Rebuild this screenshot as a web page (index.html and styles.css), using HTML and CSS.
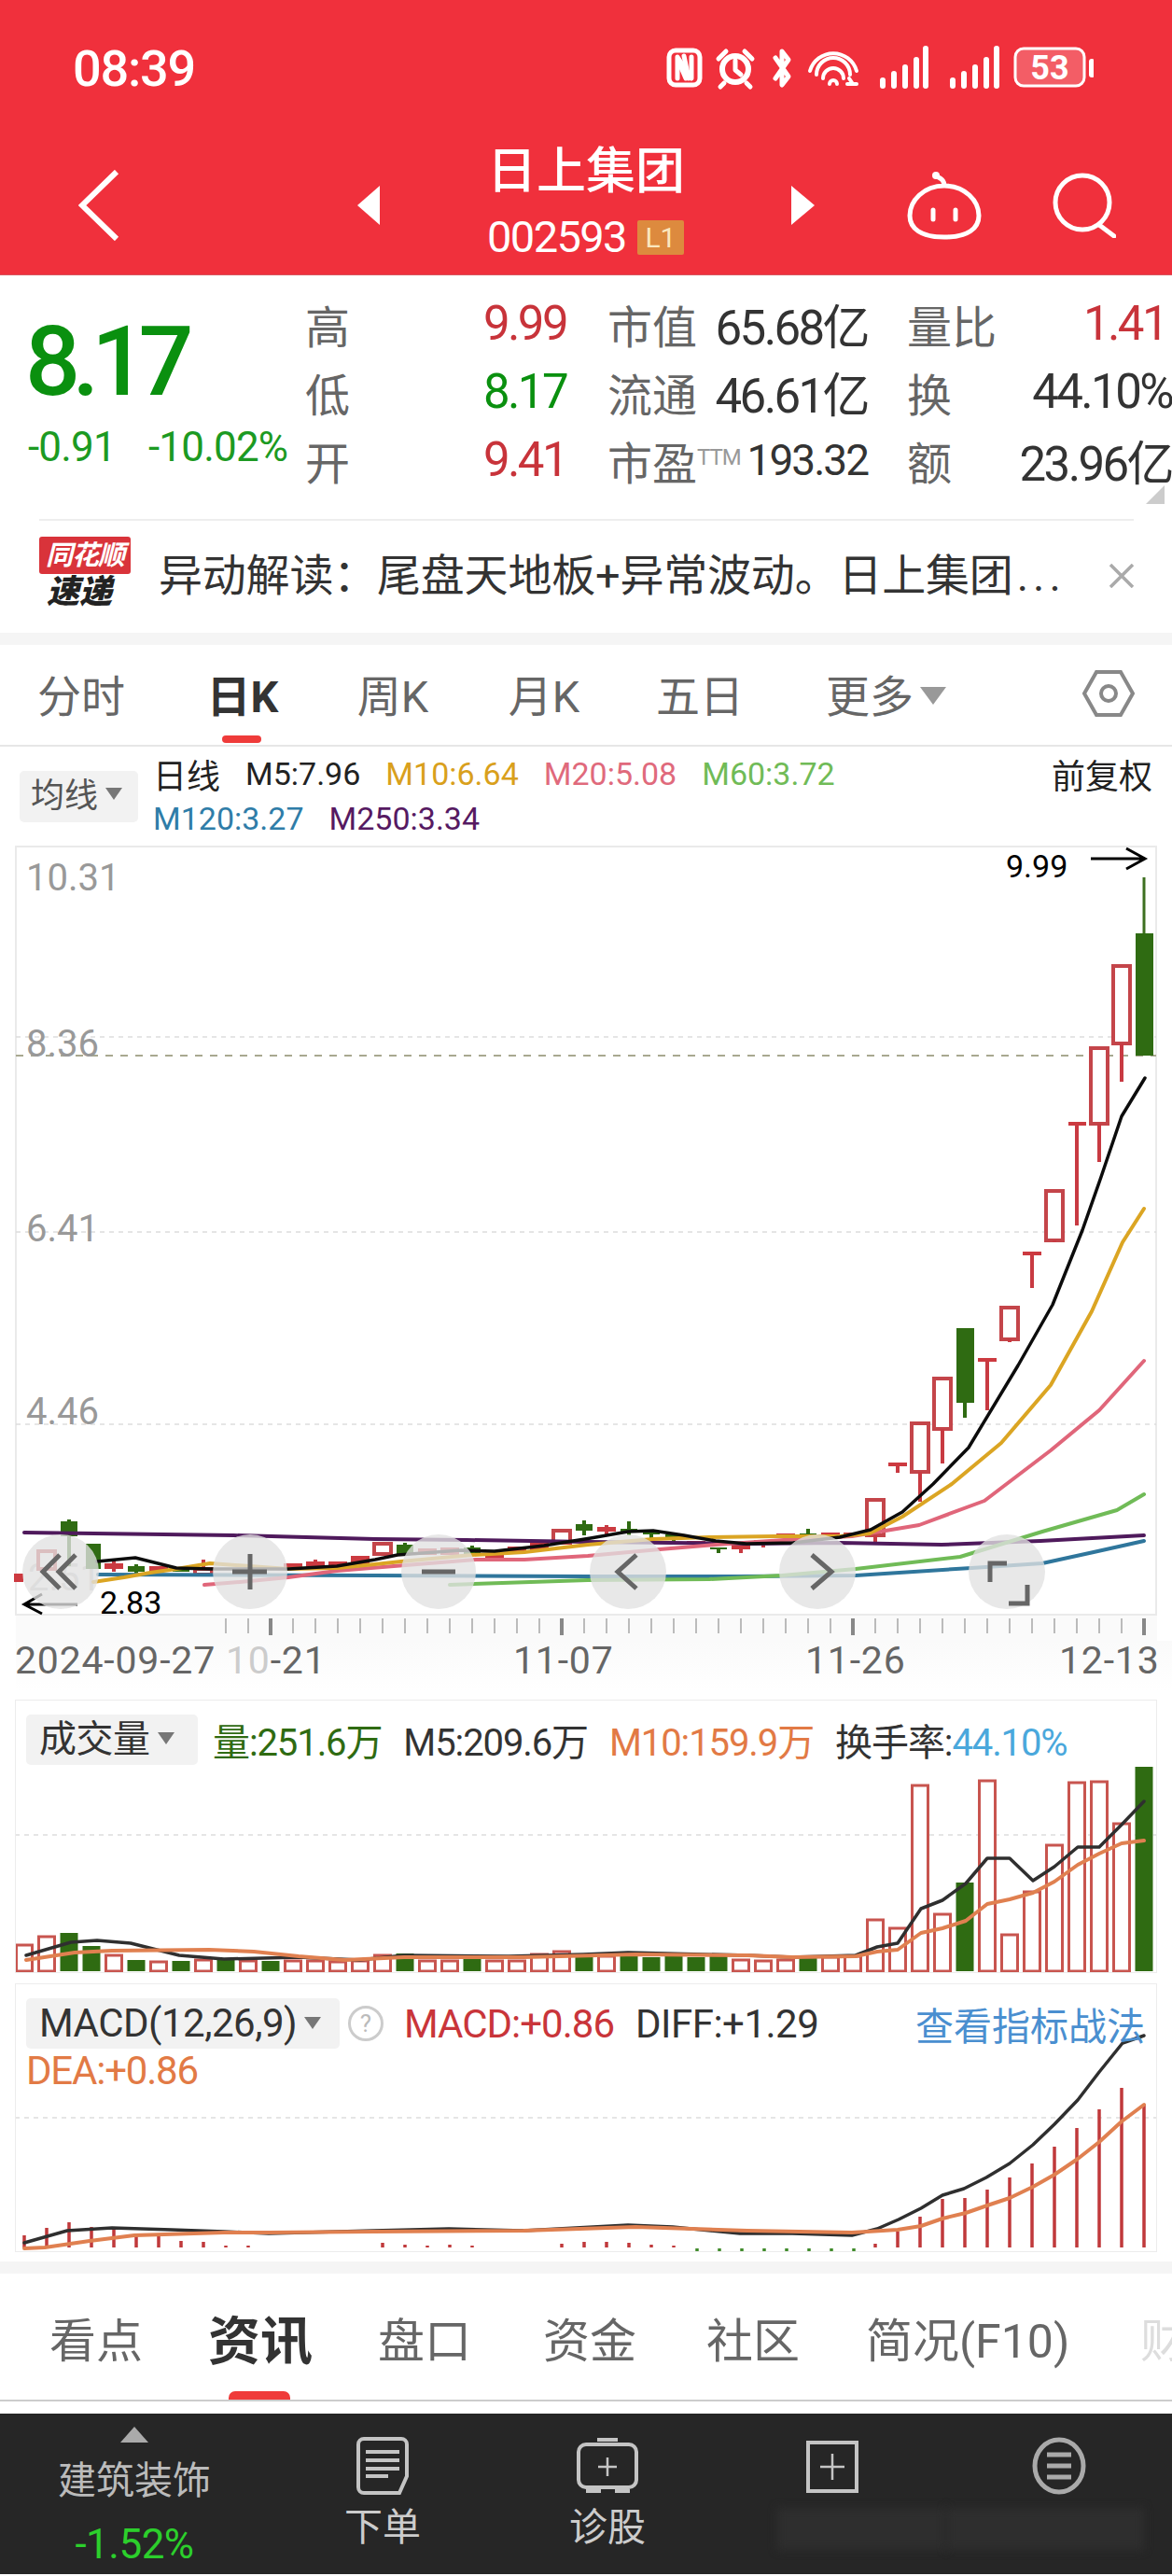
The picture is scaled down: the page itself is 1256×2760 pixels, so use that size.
FILE: index.html
```html
<!DOCTYPE html>
<html lang="zh-CN">
<head>
<meta charset="utf-8">
<title>日上集团 002593</title>
<link rel="stylesheet" href="styles.css">
</head>
<body>
<div class="page">

<header class="top">
  <div class="status">
    <span class="time">08:39</span>
    <svg class="status-icons" width="460" height="54" viewBox="712 46 460 54">
      <rect class="si" x="717" y="54" width="33" height="37" rx="7"/>
      <path class="si" d="M726 84V61l15 23V61"/>
      <path class="si" d="M733 60l5 24M729 70l6 14"/>
      <circle class="si si-t" cx="788" cy="74" r="14"/>
      <path class="si" d="M788 65v10l6 5M770 63l8-8M806 63l-8-8M776 89l-4 4M800 89l4 4"/>
      <path class="si" d="M831 62l14 20-7 9V55l7 9-14 20"/>
      <path class="si si-n" d="M868 76a26 26 0 0 1 50 0M875 80a18 18 0 0 1 36 0M882 84a11 11 0 0 1 22 0M889 90a4 4 0 0 1 8 0M908 90h10M910 84l4 6"/>
      <path class="sb" d="M946 92v-6M958 92v-13M970 92v-20M982 92v-28M992 92V52M1021 92v-6M1033 92v-13M1045 92v-20M1057 92v-28M1068 92V52"/>
      <rect class="batt" x="1088" y="52" width="74" height="40" rx="9"/>
      <path class="sb" d="M1170 66v14"/>
      <text class="batt-t" x="1125" y="85">53</text>
    </svg>
  </div>
  <nav class="nav">
    <svg class="nav-back" width="45" height="76" viewBox="0 0 45 76"><path d="M41 2L4 38l37 36"/></svg>
    <span class="tri tri-l"></span>
    <div class="ident">
      <div class="name">日上集团</div>
      <div class="code">002593<span class="lvl">L1</span></div>
    </div>
    <span class="tri tri-r"></span>
    <svg class="nav-robot" width="80" height="74" viewBox="0 0 80 74"><path class="ic" d="M40 16C18 16 3 32 3 48c0 14 12 23 37 23s37-9 37-23C77 32 62 16 40 16zM40 16c0-6-4-8-8-10"/><circle class="dot" cx="31" cy="5" r="4"/><path class="ic" d="M28 42v10M52 42v10"/></svg>
    <svg class="nav-search" width="68" height="70" viewBox="0 0 68 70"><circle class="ic" cx="32" cy="32" r="29"/><path class="ic" d="M50 56l16 12"/></svg>
  </nav>
</header>

<section class="quote">
  <div class="price">
    <div class="big">8.17</div>
    <div class="chg"><span>-0.91</span><span>-10.02%</span></div>
  </div>
  <div class="stats">
    <div class="cell"><span class="lb">高</span><span class="up">9.99</span></div>
    <div class="cell"><span class="lb">市值</span><span>65.68亿</span></div>
    <div class="cell"><span class="lb">量比</span><span class="up inset">1.41</span></div>
    <div class="cell"><span class="lb">低</span><span class="dn">8.17</span></div>
    <div class="cell"><span class="lb">流通</span><span>46.61亿</span></div>
    <div class="cell"><span class="lb">换</span><span>44.10%</span></div>
    <div class="cell"><span class="lb">开</span><span class="up">9.41</span></div>
    <div class="cell"><span class="lb">市盈<sup class="ttm">TTM</sup></span><span class="pe">193.32</span></div>
    <div class="cell"><span class="lb">额</span><span>23.96亿</span></div>
  </div>
  <span class="corner"></span>
</section>

<section class="news">
  <div class="logo"><div class="bubble">同花顺</div><div class="sd">速递</div></div>
  <div class="news-t">异动解读：尾盘天地板+异常波动。日上集团<span class="dots">...</span></div>
  <svg class="news-x" width="28" height="26" viewBox="0 0 28 26"><path d="M2 1l24 24M26 1L2 25"/></svg>
</section>

<div class="gap"></div>

<div class="tabs">
  <span class="tab">分时</span>
  <span class="tab on">日K</span>
  <span class="tab">周K</span>
  <span class="tab">月K</span>
  <span class="tab">五日</span>
  <span class="tab more">更多<i class="caret"></i></span>
  <svg class="hex" width="56" height="52" viewBox="0 0 56 52"><path d="M15 3h26l13 23-13 23H15L2 26z"/><circle cx="28" cy="26" r="8"/></svg>
</div>

<div class="legend">
  <div class="ma-btn">均线<i class="caret-s"></i></div>
  <div class="ma-rows">
    <div class="ma-row">
      <span class="c-k day">日线</span><span class="c-k">M5:7.96</span><span class="c-y">M10:6.64</span><span class="c-p">M20:5.08</span><span class="c-g">M60:3.72</span><span class="c-k adj">前复权</span>
    </div>
    <div class="ma-row">
      <span class="c-b">M120:3.27</span><span class="c-v">M250:3.34</span>
    </div>
  </div>
</div>

<svg class="kline" width="1256" height="852" viewBox="0 908 1256 852">
  <rect class="axis-bg" x="17" y="1733" width="1223" height="27"/>
  <rect class="frame" x="17" y="909" width="1222" height="823"/>
  <path class="grid" d="M17 1113H1239M17 1322H1239M17 1528H1239"/>
  <path class="pline" d="M17 1133H1239"/>
  <text class="yl" x="28" y="956">10.31</text>
  <text class="yl" x="28" y="1134">8.36</text>
  <text class="yl" x="28" y="1332">6.41</text>
  <text class="yl" x="28" y="1528">4.46</text>
  <text class="yl yl-f" x="30" y="1706">2.51</text>

  <path class="c-g-f" d="M65 1632h18v16h-18zM92 1656h16v27h-16zM137 1680h18v6h-18zM185 1683h18v3h-18zM425 1657h18v11h-18zM497 1660h18v8h-18zM617 1635h18v7h-18zM665 1640h18v4h-18zM689 1643h18v3h-18zM713 1646h18v3h-18zM761 1660h18v2h-18zM857 1645h18v3h-18zM1025 1425h19v80h-19zM1217 1002h19v131h-19z"/>
  <path class="c-g-w" d="M74 1630v50M146 1678v10M434 1655v5M506 1658v4M626 1631v16M674 1632v15M698 1646v4M722 1649v7M770 1662v4M866 1640v5M1034 1505v16"/>
  <path class="c-g-t" d="M1226 942v60"/>
  <path class="c-r-f" d="M15 1688h10v9h-10zM112 1677h20v6h-20zM160 1680h20v6h-20zM304 1677h20v6h-20zM328 1675h20v7h-20zM352 1675h20v7h-20zM376 1669h20v11h-20zM448 1661h20v7h-20zM472 1660h20v8h-20zM520 1668h20v6h-20zM544 1659h20v6h-20zM568 1655h20v9h-20zM640 1638h20v5h-20zM736 1653h20v4h-20zM784 1657h20v5h-20zM808 1652h20v4h-20zM832 1645h20v4h-20zM880 1644h20v4h-20zM904 1644h20v3h-20zM952 1569h20v4h-20zM1048 1457h20v4h-20zM1096 1343h20v4h-20zM1145 1204h19v4h-19z"/>
  <path class="c-r-h" d="M41 1664h18v19h-18zM209 1683h18v6h-18zM401 1656h18v11h-18zM593 1642h18v13h-18zM929 1609h18v38h-18zM977 1527h18v52h-18zM1001 1479h18v54h-18zM1073 1403h18v34h-18zM1121 1278h18v53h-18zM1169 1125h18v81h-18zM1193 1037h18v83h-18z"/>
  <path class="c-r-w" d="M218 1673v9M122 1674v12M338 1673v3M938 1647v8M962 1573v7M986 1579v32M1010 1533v37M1058 1461v52M1082 1437v3M1106 1347v35M1130 1331v2M1154 1208v107M1178 1206v41M1202 1120v41M794 1662v4M818 1656v4M650 1636v12"/>

  <polyline class="l-v" points="26,1644 250,1647 402,1651 500,1652 630,1654 800,1656 900,1655 1009,1657 1115,1653 1226,1647"/>
  <polyline class="l-b" points="105,1689 400,1690 630,1691 792,1691 917,1690 1041,1682 1117,1677 1172,1665 1226,1653"/>
  <polyline class="l-g" points="482,1700 630,1695 760,1694 838,1690 917,1683 1029,1670 1117,1643 1197,1620 1226,1603"/>
  <polyline class="l-p" points="219,1700 257,1697 309,1692 361,1685 422,1680 510,1673 562,1673 630,1669 707,1662 767,1657 840,1652 913,1648 985,1636 1055,1610 1126,1556 1178,1513 1226,1460"/>
  <polyline class="l-y" points="100,1697 133,1692 161,1687 189,1683 225,1677 309,1683 361,1682 402,1678 430,1675 506,1668 562,1665 630,1657 700,1651 760,1649 830,1648 900,1648 932,1645 967,1627 1020,1592 1073,1548 1126,1486 1170,1407 1203,1333 1226,1297"/>
  <polyline class="l-k" points="104,1675 145,1671 189,1682 225,1683 309,1683 361,1680 402,1673 426,1668 494,1663 530,1664 583,1658 633,1650 673,1643 700,1642 733,1647 767,1653 800,1656 850,1655 900,1649 933,1641 967,1622 1000,1592 1038,1553 1091,1465 1128,1400 1160,1320 1180,1263 1202,1198 1227,1157"/>

  <text class="mark" x="1078" y="942">9.99</text>
  <path class="arr" d="M1169 922h58M1207 911l20 11-20 11"/>
  <text class="mark" x="107" y="1731">2.83</text>
  <path class="arr" d="M83 1721H26M45 1710l-19 11 19 10"/>

  <ellipse class="btn" cx="65" cy="1686" rx="41" ry="40"/>
  <ellipse class="btn" cx="268" cy="1686" rx="40" ry="40"/>
  <ellipse class="btn" cx="470" cy="1686" rx="40" ry="40"/>
  <ellipse class="btn" cx="673" cy="1686" rx="41" ry="40"/>
  <ellipse class="btn" cx="876" cy="1686" rx="41" ry="40"/>
  <ellipse class="btn" cx="1079" cy="1686" rx="41" ry="40"/>
  <path class="bi" d="M64 1668l-18 18 18 18M81 1668l-18 18 18 18"/>
  <path class="bi" d="M268 1667v38M249 1686h37"/>
  <path class="bi" d="M452 1686h36"/>
  <path class="bi" d="M682 1668l-20 18 20 18"/>
  <path class="bi" d="M870 1668l21 18-21 18"/>
  <path class="bi" d="M1061 1697v-20h18M1101 1700v20h-20"/>

  <path class="tk" d="M241 1744H1228"/>
  <path class="tm" d="M290 1736v18M602 1736v18M914 1736v18M1226 1736v18"/>
</svg>

<div class="dates">
  <span>2024-09-27</span><span><em>10</em>-21</span><span>11-07</span><span>11-26</span><span>12-13</span>
</div>

<section class="panel panel-vol">
  <svg class="plot" width="1224" height="293" viewBox="16 1823 1224 293">
    <path class="grid" d="M16 1968H1240"/>
    <path class="v-h" d="M17.500 2086h17v28h-17zM41.500 2077h17v37h-17zM113.500 2097h17v17h-17zM161.500 2104h17v10h-17zM209.500 2102h17v12h-17zM257.500 2103h17v11h-17zM305.500 2103h17v11h-17zM329.500 2103h17v11h-17zM353.500 2104h17v10h-17zM377.500 2103h17v11h-17zM401.500 2097h17v17h-17zM449.500 2103h17v11h-17zM473.500 2103h17v11h-17zM521.500 2103h17v11h-17zM545.500 2103h17v11h-17zM569.500 2096h17v18h-17zM593.500 2093h17v21h-17zM641.500 2098h17v16h-17zM785.500 2102h17v12h-17zM809.500 2103h17v11h-17zM833.500 2102h17v12h-17zM881.500 2099h17v15h-17zM905.500 2098h17v16h-17zM929.500 2059h17v55h-17zM953.500 2068h17v46h-17zM977.500 1915h17v199h-17zM1001.500 2053h17v61h-17zM1049.500 1910h17v204h-17zM1073.500 2075h17v39h-17zM1097.500 2029h17v85h-17zM1121.500 1979h17v135h-17zM1145.500 1912h17v202h-17zM1169.500 1911h17v203h-17zM1193.500 1956h17v158h-17z"/>
    <path class="v-f" d="M64.500 2073h19v41h-19zM88.500 2087h19v27h-19zM136.500 2102h19v12h-19zM184.500 2103h19v11h-19zM232.500 2102h19v12h-19zM280.500 2103h19v11h-19zM424.500 2095h19v19h-19zM496.500 2099h19v15h-19zM616.500 2095h19v19h-19zM664.500 2095h19v19h-19zM688.500 2099h19v15h-19zM712.500 2098h19v16h-19zM736.500 2099h19v15h-19zM760.500 2098h19v16h-19zM856.500 2100h19v14h-19zM1024.500 2019h19v95h-19zM1216.500 1895h19v219h-19z"/>
    <polyline class="v-k" points="28,2097 76,2083 104,2081 140,2084 192,2097 240,2101 320,2099 385,2102 433,2097 545,2098 625,2096 673,2094 801,2097 849,2099 917,2097 940,2088 962,2084 987,2047 1010,2038 1035,2020 1058,1993 1082,1993 1107,2017 1130,2002 1155,1981 1178,1981 1202,1957 1226,1932"/>
    <polyline class="v-o" points="28,2102 80,2094 120,2092 224,2091 272,2093 320,2098 369,2102 433,2099 561,2099 681,2096 801,2097 849,2099 917,2098 940,2093 962,2091 987,2073 1010,2068 1035,2060 1058,2042 1082,2037 1107,2030 1130,2018 1155,2000 1178,1988 1202,1977 1226,1974"/>
  </svg>
  <div class="phead">
    <div class="pbtn vol-btn">成交量<i class="caret-s"></i></div>
    <span class="c-dg">量:251.6万</span>
    <span class="c-d">M5:209.6万</span>
    <span class="c-o">M10:159.9万</span>
    <span class="c-d">换手率:<b class="c-sky">44.10%</b></span>
  </div>
</section>

<section class="panel panel-macd">
  <svg class="plot" width="1224" height="288" viewBox="16 2127 1224 288">
    <path class="grid" d="M16 2271H1240"/>
    <path class="m-r" d="M26 2397V2410M50 2389V2410M74 2383V2410M98 2388V2410M122 2391V2410M146 2395V2410M170 2398V2410M194 2403V2410M218 2404V2410M242 2408V2410M266 2408V2410M410 2405V2410M434 2407V2410M458 2408V2410M482 2407V2410M506 2408V2410M602 2406V2410M626 2404V2410M650 2404V2410M674 2405V2410M698 2407V2410M722 2408V2410M938 2406V2410M962 2393V2410M986 2377V2410M1010 2358V2410M1034 2357V2410M1058 2348V2410M1082 2335V2410M1106 2320V2410M1130 2302V2410M1154 2282V2410M1178 2262V2410M1202 2239V2410M1226 2257V2410"/>
    <path class="m-g" d="M747 2411v4M771 2411v4M795 2411v4M819 2411v4M843 2411v4M867 2411v4M891 2411v4M915 2411v4"/>
    <polyline class="v-k" points="26,2405 72,2392 120,2389 184,2391 240,2393 288,2395 400,2392 481,2390 561,2392 673,2386 721,2388 793,2395 849,2395 913,2397 940,2390 963,2380 987,2368 1010,2354 1033,2347 1057,2335 1082,2320 1107,2300 1130,2278 1155,2252 1178,2222 1203,2191 1226,2183"/>
    <polyline class="v-o" points="26,2411 48,2410 96,2403 144,2397 240,2394 288,2394 400,2393 561,2392 681,2388 801,2392 913,2394 962,2391 987,2387 1010,2379 1035,2373 1058,2365 1082,2357 1107,2345 1130,2332 1155,2315 1178,2297 1202,2275 1226,2257"/>
  </svg>
  <div class="phead macd-head">
    <div class="pbtn macd-btn">MACD(12,26,9)<i class="caret-s"></i></div>
    <span class="help">?</span>
    <span class="c-rd">MACD:+0.86</span>
    <span class="c-d">DIFF:+1.29</span>
    <span class="c-link">查看指标战法</span>
    <span class="c-o dea">DEA:+0.86</span>
  </div>
</section>

<div class="gap gap-b"></div>

<div class="btabs">
  <span>看点</span><span class="on">资讯</span><span>盘口</span><span>资金</span><span>社区</span><span>简况(F10)</span><span class="fade">财务</span>
</div>

<footer class="foot">
  <div class="fcol first">
    <i class="ftri"></i>
    <div class="fname">建筑装饰</div>
    <div class="fpct">-1.52%</div>
  </div>
  <div class="fcol">
    <svg class="fic" width="56" height="62" viewBox="0 0 56 62"><path d="M8 2h40a6 6 0 0 1 6 6v34l-8 18H8a6 6 0 0 1-6-6V8a6 6 0 0 1 6-6z"/><path d="M10 16h36M10 25h36M10 34h36M10 42h24"/></svg>
    <div class="flabel">下单</div>
  </div>
  <div class="fcol">
    <svg class="fic" width="66" height="62" viewBox="0 0 66 62"><path d="M22 3h22M10 8h46a8 8 0 0 1 8 8v30a8 8 0 0 1-8 8H10a8 8 0 0 1-8-8V16a8 8 0 0 1 8-8z"/><path class="thin" d="M33 22v20M23 32h20"/><path d="M10 58h16M41 58h16"/></svg>
    <div class="flabel">诊股</div>
  </div>
  <div class="fcol">
    <svg class="fic" width="56" height="62" viewBox="0 0 56 62"><path d="M2 6h52v52H2z"/><path class="thin" d="M28 18v28M15 32h26"/></svg>
    <div class="fblur fblur-l"></div>
  </div>
  <div class="fcol">
    <svg class="fic fic-m" width="58" height="62" viewBox="0 0 58 62"><ellipse cx="29" cy="31" rx="26" ry="28"/><path d="M16 19h26M16 31h26M16 43h26"/></svg>
    <div class="fblur fblur-r"></div>
  </div>
</footer>

</div>
</body>
</html>
```

FILE: styles.css
```css
* { box-sizing: border-box; }
html, body { margin: 0; padding: 0; background: #fff; }
body { font-family: Roboto, "Noto Sans CJK SC", sans-serif; color: #333; }
.page { width: 1256px; height: 2760px; overflow: hidden; }

/* header */
.top { height: 295px; background: #f0303c; border-bottom: 1px solid #d8565f; color: #fff; }
.status { height: 146px; display: flex; align-items: center; padding: 0 84px 0 78px; }
.time { font-size: 54px; letter-spacing: -1.2px; font-weight: 500; }
.status-icons { margin-left: auto; }
.si { fill: none; stroke: #fff; stroke-width: 5; stroke-linejoin: round; stroke-linecap: round; }
.si-t { stroke-width: 6; }
.si-n { stroke-width: 4; }
.sb { fill: none; stroke: #fff; stroke-width: 6; stroke-linecap: round; }
.batt { fill: rgba(255, 255, 255, .22); stroke: #fff; stroke-width: 3; }
.batt-t { fill: #fff; font-size: 36px; font-weight: 700; text-anchor: middle; font-family: Roboto, sans-serif; }
.nav { height: 148px; display: flex; align-items: center; }
.nav-back { margin-left: 84px; flex: none; }
.nav-back path { fill: none; stroke: #fff; stroke-width: 6; }
.tri { flex: none; width: 0; height: 0; border-top: 21px solid transparent; border-bottom: 21px solid transparent; }
.tri-l { margin-left: 254px; border-right: 24px solid #fff; }
.tri-r { border-left: 25px solid #fff; }
.ident { width: 211px; margin: 0 115px; padding-top: 8px; align-self: flex-start; }
.name { font-size: 53px; line-height: 60px; font-weight: 500; white-space: nowrap; text-align: center; }
.code { display: flex; align-items: center; margin-top: 16px; font-size: 47px; line-height: 48px; letter-spacing: -1.6px; white-space: nowrap; }
.lvl { margin-left: 12px; width: 53px; height: 37px; background: #dd8a3e; color: #fbe7bf; font-size: 30px; line-height: 37px; text-align: center; border-radius: 2px; letter-spacing: 0; }
.nav-robot { margin-left: 99px; flex: none; }
.nav-search { margin-left: 76px; flex: none; }
.ic { fill: none; stroke: #fff; stroke-width: 5; stroke-linecap: round; }
.dot { fill: #fff; }

/* quote */
.quote { position: relative; height: 261px; display: flex; }
.price { width: 327px; padding: 47px 0 0 27px; flex: none; }
.big { font-size: 104px; line-height: 92px; color: #0a900f; letter-spacing: -8.5px; font-weight: 500; }
.chg { display: flex; gap: 35px; margin-top: 20px; font-size: 44px; line-height: 50px; color: #1c9a22; letter-spacing: -.8px; white-space: nowrap; padding-left: 3px; }
.stats { padding-top: 15px; display: grid; grid-template-columns: 280px 279px 284px; grid-template-rows: repeat(3, 73px); flex: none; width: 929px; }
.cell { display: flex; justify-content: space-between; align-items: center; font-size: 51px; letter-spacing: -2.6px; color: #333; white-space: nowrap; }
.cell:nth-child(3n+2) { margin-left: 44px; margin-right: -44px; }
.cell:nth-child(3n) { margin-left: 86px; margin-right: -86px; }
.lb { color: #666; letter-spacing: 0; font-size: 48px; }
.up { color: #c8333a; }
.dn { color: #0a900f; }
.inset { margin-right: 6px; }
.ttm { font-size: 24px; color: #999; vertical-align: 16px; line-height: 0; letter-spacing: -1px; }
.pe { font-size: 46px; letter-spacing: -2px; }
.corner { position: absolute; right: 8px; bottom: 16px; width: 0; height: 0; border-left: 20px solid transparent; border-bottom: 20px solid #ccc; }

/* news */
.news { height: 122px; margin: 0; border-top: 0; display: flex; align-items: center; padding: 0 40px 0 42px; position: relative; }
.news::before { content: ""; position: absolute; left: 42px; right: 41px; top: 0; height: 2px; background: #eee; }
.logo { width: 100px; flex: none; margin-top: -4px; }
.bubble { width: 98px; height: 40px; background: #d9333a; color: #fff; font-size: 29px; line-height: 40px; font-weight: 700; font-style: italic; text-align: center; border-radius: 3px; white-space: nowrap; letter-spacing: -1px; }
.sd { font-size: 35px; line-height: 40px; font-weight: 900; font-style: italic; color: #222; text-align: center; padding-right: 14px; letter-spacing: 0; }
.news-t { margin-left: 28px; font-size: 47px; line-height: 60px; color: #333; white-space: nowrap; flex: 1; letter-spacing: -.2px; }
.dots { letter-spacing: 5px; margin-left: 4px; }
.news-x path { fill: none; stroke: #aaa; stroke-width: 3.5; }

.gap { height: 13px; background: #f5f5f5; }

/* tabs */
.tabs { position: relative; height: 109px; padding-bottom: 4px; display: grid; grid-template-columns: 174px 172px 150px 174px 160px 200px 1fr; align-items: center; border-bottom: 2px solid #e6e6e6; }
.tab { text-align: center; font-size: 47px; color: #666; white-space: nowrap; position: relative; }
.tab.on { color: #333; font-weight: 700; }
.tab.on::after { content: ""; position: absolute; left: 64px; bottom: -19px; width: 42px; height: 8px; border-radius: 4px; background: #ef3b3a; }
.tab.more { text-align: left; padding-left: 55px; }
.caret { display: inline-block; width: 0; height: 0; margin-left: 7px; vertical-align: 8px; border-left: 14px solid transparent; border-right: 14px solid transparent; border-top: 19px solid #999; }
.hex { justify-self: end; margin-right: 40px; }
.hex path, .hex circle { fill: none; stroke: #888; stroke-width: 4; }

/* legend */
.legend { height: 106px; display: flex; padding: 26px 0 0 21px; }
.ma-btn { width: 127px; height: 55px; background: #f2f2f2; border-radius: 5px; color: #555; font-size: 36px; line-height: 55px; padding-left: 12px; flex: none; white-space: nowrap; }
.caret-s { display: inline-block; width: 0; height: 0; margin-left: 8px; vertical-align: 8px; border-left: 9px solid transparent; border-right: 9px solid transparent; border-top: 13px solid #777; }
.ma-rows { margin: -26px 21px 0 16px; flex: 1; padding-top: 5px; }
.ma-row { display: flex; gap: 27px; height: 48px; align-items: center; font-size: 34px; white-space: nowrap; }
.day { font-size: 36px; }
.adj { margin-left: auto; font-size: 36px; color: #444; }
.c-k { color: #222; }
.c-y { color: #d9a01c; }
.c-p { color: #e06a7c; }
.c-g { color: #70bb57; }
.c-b { color: #2f7da8; }
.c-v { color: #561a62; }

/* kline */
.kline { display: block; }
.kline text { font-family: Roboto, sans-serif; }
.axis-bg { fill: #fafafa; }
.frame { fill: none; stroke: #eaeaea; stroke-width: 2; }
.grid { fill: none; stroke: #ddd; stroke-width: 1.5; stroke-dasharray: 5 5; }
.pline { fill: none; stroke: #a8a890; stroke-width: 2; stroke-dasharray: 8 8; }
.yl { font-size: 40px; fill: #999; }
.yl-f { fill: #ccc; }
.c-g-f { fill: #2f6b12; }
.c-g-w { fill: none; stroke: #2f6b12; stroke-width: 4; }
.c-g-t { fill: none; stroke: #3e7020; stroke-width: 3; }
.c-r-f { fill: #cc3a40; }
.c-r-h { fill: #fff; stroke: #c4454a; stroke-width: 4; }
.c-r-w { fill: none; stroke: #c83a42; stroke-width: 4; }
.l-v, .l-b, .l-g, .l-p, .l-y, .l-k { fill: none; stroke-linejoin: round; stroke-linecap: round; }
.l-v { stroke: #4f1a5c; stroke-width: 4; }
.l-b { stroke: #2f769c; stroke-width: 4; }
.l-g { stroke: #70bb57; stroke-width: 4; }
.l-p { stroke: #e0667a; stroke-width: 4; }
.l-y { stroke: #dba523; stroke-width: 4; }
.l-k { stroke: #0c0c0c; stroke-width: 3.5; }
.mark { font-size: 34px; fill: #000; }
.arr { fill: none; stroke: #000; stroke-width: 3; }
.btn { fill: rgba(226, 226, 226, .78); }
.bi { fill: none; stroke: #666; stroke-width: 5; }
.tk { fill: none; stroke: #bbb; stroke-width: 16; stroke-dasharray: 2 22; }
.tm { fill: none; stroke: #888; stroke-width: 4; }

/* dates */
.dates { height: 63px; padding: 0 0 0 16px; display: grid; grid-template-columns: 226px 308px 313px 272px auto; align-items: start; font-size: 41px; line-height: 42px; color: #666; letter-spacing: .8px; background: linear-gradient(90deg, #fff 0, #fff 17px, transparent 17px), linear-gradient(#fafafa, #fff 85%); white-space: nowrap; }
.dates em { font-style: normal; color: #ccc; }

/* panels */
.panel { position: relative; display: grid; width: 1224px; margin: 0 16px; border: 1px solid #ececec; overflow: hidden; }
.panel-vol { height: 293px; margin-bottom: 11px; }
.panel-macd { height: 288px; margin-bottom: 10px; }
.plot { grid-area: 1 / 1; display: block; margin: -1px; }
.phead { grid-area: 1 / 1; display: flex; flex-wrap: wrap; align-items: center; align-content: flex-start; padding: 13px 0 0 11px; font-size: 40px; height: 70px; white-space: nowrap; }
.pbtn { background: #f2f2f2; border-radius: 5px; height: 54px; line-height: 54px; padding-left: 14px; color: #333; white-space: nowrap; letter-spacing: -.5px; }
.vol-btn { width: 184px; margin-right: 16px; font-size: 40px; }
.phead > span { margin-right: 23px; letter-spacing: -1.1px; }
.c-dg { color: #2f6b12; }
.c-d { color: #333; }
.c-o { color: #e27a45; }
.c-sky { color: #4aa8dc; font-weight: 400; }
.c-rd { color: #c9353a; }
.c-link { color: #4a8fd0; font-size: 41px; margin: 0 0 0 auto !important; padding-right: 12px; letter-spacing: 0 !important; }
.macd-head { padding-top: 12px; height: auto; }
.macd-btn { width: 336px; font-size: 42px; margin-right: 9px; }
.help { width: 38px; height: 38px; border: 3px solid #ccc; border-radius: 50%; color: #bbb; font-size: 26px; line-height: 32px; text-align: center; margin-right: 22px !important; letter-spacing: 0 !important; }
.macd-head .c-rd { font-size: 42px; letter-spacing: -1px; }
.macd-head .c-d { font-size: 42px; letter-spacing: -.5px; }
.dea { flex-basis: 100%; line-height: 42px; font-size: 42px; letter-spacing: -1.2px !important; }
.v-h { fill: #fff; stroke: #c8554f; stroke-width: 3; }
.v-f { fill: #2f6b12; }
.v-k, .v-o { fill: none; stroke-linejoin: round; stroke-linecap: round; }
.v-k { stroke: #2f2f2f; stroke-width: 3.5; }
.v-o { stroke: #e08050; stroke-width: 4; }
.m-r { fill: none; stroke: #c0393b; stroke-width: 3.5; }
.m-g { fill: none; stroke: #3f8a2a; stroke-width: 3.5; }

.gap-b { height: 13px; }

/* bottom tabs */
.btabs { height: 137px; display: grid; grid-template-columns: 170px 182px 177px 175px 171px 294px 60px; padding-left: 53px; align-items: center; border-bottom: 2px solid #ccc; font-size: 50px; color: #666; white-space: nowrap; overflow: hidden; }
.btabs span { position: relative; }
.btabs .on { font-size: 56px; font-weight: 700; color: #333; }
.btabs .on::after { content: ""; position: absolute; left: 22px; bottom: -32px; width: 66px; height: 14px; border-radius: 7px 7px 0 0; background: #ef3b3a; }
.btabs .fade { color: #ddd; }

/* footer */
.foot { margin-top: 13px; height: 172px; background: #262626; display: grid; grid-template-columns: 288px 244px 238px 244px 242px; }
.fcol { display: flex; flex-direction: column; align-items: center; padding-top: 25px; position: relative; }
.fcol.first { padding-top: 14px; }
.ftri { width: 0; height: 0; border-left: 15px solid transparent; border-right: 15px solid transparent; border-bottom: 17px solid #aaa; margin-bottom: 16px; }
.fname { font-size: 41px; line-height: 50px; color: #bbb; white-space: nowrap; }
.fpct { font-size: 44px; line-height: 50px; margin-top: 18px; color: #2ccf2c; white-space: nowrap; letter-spacing: -.5px; }
.fic path, .fic ellipse { fill: none; stroke: #c4c4c4; stroke-width: 4; }
.fic .thin { stroke-width: 2.5; }
.fic-m path, .fic-m ellipse { stroke: #aaa; stroke-width: 5; }
.flabel { margin-top: 13px; font-size: 41px; line-height: 44px; color: #ccc; white-space: nowrap; }
.fblur { margin-top: 14px; height: 45px; background: #2e2e2e; filter: blur(5px); }
.fblur-l { width: 181px; align-self: flex-end; }
.fblur-r { width: 212px; align-self: flex-start; }
```
